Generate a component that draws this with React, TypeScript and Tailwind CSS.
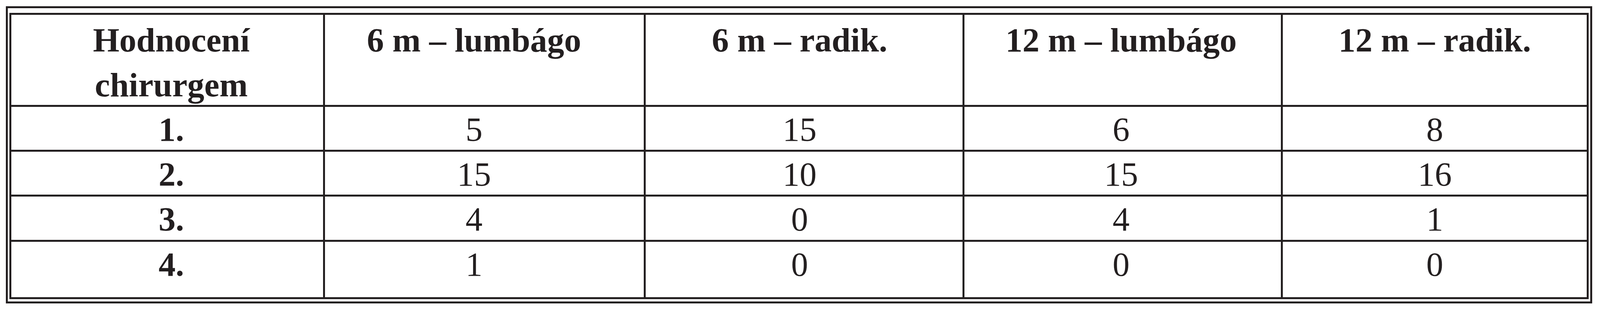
import React from "react";

const headers: React.ReactNode[] = [
  <>Hodnocení<br />chirurgem</>,
  "6 m – lumbágo",
  "6 m – radik.",
  "12 m – lumbágo",
  "12 m – radik.",
];

const rows: string[][] = [
  ["1.", "5", "15", "6", "8"],
  ["2.", "15", "10", "15", "16"],
  ["3.", "4", "0", "4", "1"],
  ["4.", "1", "0", "0", "0"],
];

const colPad = ["pl-[21px]", "pr-[53px]", "pr-[23px]", "pr-[8px]", ""];

export default function App() {
  return (
    <div className="min-h-[800px] bg-white pt-[16px] pl-[15px]">
      <div
        className="w-[4061px] border-[5px] border-[#231f20] pt-[12px] pl-[4px] pr-[4px] pb-[6px] text-[#231f20]"
        style={{ fontFamily: '"Liberation Serif", "Times New Roman", serif' }}
      >
        <div className="grid w-[4043px] grid-cols-[798px_816px_811px_810px_778px] grid-rows-[231px_110px_110px_111px_142px] gap-[5px] bg-[#231f20] p-[5px]">
          {headers.map((h, i) => (
            <div
              key={`h${i}`}
              className={`bg-white pt-[7px] text-center text-[87px] font-bold leading-[115px] ${colPad[i]}`}
            >
              {h}
            </div>
          ))}
          {rows.map((r, ri) =>
            r.map((c, ci) => (
              <div
                key={`${ri}-${ci}`}
                className={`bg-white text-center text-[87px] leading-[115px] ${ci === 0 ? "font-bold" : "font-normal"} ${colPad[ci]}`}
              >
                {c}
              </div>
            ))
          )}
        </div>
      </div>
    </div>
  );
}
